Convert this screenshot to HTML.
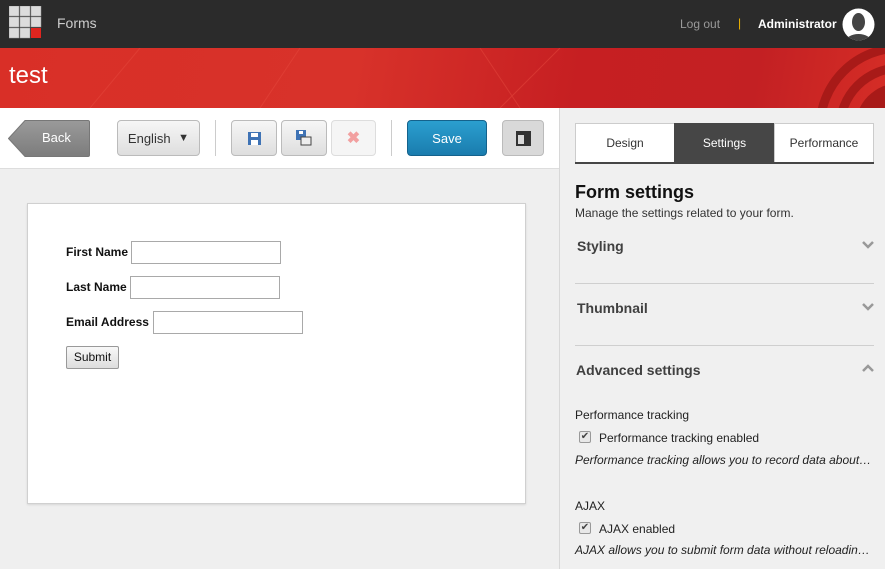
<!DOCTYPE html>
<html><head><style>
*{box-sizing:border-box;margin:0;padding:0}
body{width:885px;height:569px;overflow:hidden;font-family:"Liberation Sans",sans-serif;background:#efefef;position:relative}
.a{position:absolute}
.top{left:0;top:0;width:885px;height:48px;background:#2b2b2b}
.ban{left:0;top:48px;width:885px;height:60px;background:linear-gradient(100deg,#d92f27 0%,#d8322a 40%,#c61f22 65%,#c32023 85%,#d52d26 100%);overflow:hidden}
.tb{left:0;top:108px;width:559px;height:61px;background:#fff;border-bottom:1px solid #ddd}
.btn{position:absolute;top:120px;height:36px;border:1px solid #bbb;border-radius:4px;background:linear-gradient(#f6f6f6,#dedede);font-size:13px;color:#333;display:flex;align-items:center;justify-content:center}
.sep{position:absolute;top:120px;width:1px;height:36px;background:#ccc}
.rp{left:559px;top:108px;width:326px;height:461px;background:#f0f0f0;border-left:1px solid #d8d8d8}
.tab{position:absolute;top:123px;height:40px;font-size:12px;display:flex;align-items:center;justify-content:center;border:1px solid #ccc;background:#fff;color:#333}
.sec{position:absolute;left:577px;font-size:14px;font-weight:bold;color:#404040}
.hr{position:absolute;left:575px;width:299px;height:1px;background:#cfcfcf}
.chev{position:absolute;left:862px;width:12px;height:12px}
.lbl{position:absolute;left:66px;font-size:12px;font-weight:bold;color:#111}
.inp{position:absolute;height:23px;width:150px;border:1px solid #a9a9a9;background:#fff}
.cb{position:absolute;left:579px;width:12px;height:12px;border:1px solid #999;border-radius:2px;background:#e8e8e8;font-size:10px;line-height:10px;text-align:center;color:#444}
.t12{position:absolute;font-size:12px;color:#222}
</style></head><body>
<div class="a top"></div>
<svg class="a" style="left:9px;top:6px" width="33" height="33">
<g fill="#dcdcdc" stroke="#999" stroke-width=".5"><rect x="0" y="0" width="10" height="10"/><rect x="11" y="0" width="10" height="10"/><rect x="22" y="0" width="10" height="10"/><rect x="0" y="11" width="10" height="10"/><rect x="11" y="11" width="10" height="10"/><rect x="22" y="11" width="10" height="10"/><rect x="0" y="22" width="10" height="10"/><rect x="11" y="22" width="10" height="10"/></g><rect x="22" y="22" width="10" height="10" fill="#e0251f"/></svg>
<div class="a" style="left:57px;top:15px;font-size:14px;color:#ccc">Forms</div>
<div class="a" style="left:680px;top:17px;font-size:12px;color:#999">Log out</div>
<div class="a" style="left:738px;top:16px;font-size:12px;color:#f0b400">|</div>
<div class="a" style="left:758px;top:17px;font-size:12px;color:#fff;font-weight:bold">Administrator</div>
<svg class="a" style="left:842px;top:8px" width="33" height="33"><circle cx="16.5" cy="16.5" r="16" fill="#fff"/><clipPath id="c"><circle cx="16.5" cy="16.5" r="16"/></clipPath><g clip-path="url(#c)" fill="#444"><ellipse cx="16.5" cy="14" rx="6.5" ry="9"/><ellipse cx="16.5" cy="34" rx="13" ry="8"/></g></svg>
<div class="a ban"><svg width="885" height="60"><g stroke="#e54a3e" stroke-width="1" opacity=".5"><line x1="90" y1="60" x2="140" y2="0"/><line x1="260" y1="60" x2="300" y2="0"/><line x1="500" y1="60" x2="560" y2="0"/><line x1="480" y1="0" x2="520" y2="60"/></g><g fill="none" stroke="#a81a18" stroke-width="9"><circle cx="900" cy="80" r="60"/><circle cx="900" cy="80" r="80"/></g><circle cx="900" cy="80" r="45" fill="#a81a18"/></svg></div>
<div class="a" style="left:9px;top:62px;font-size:24px;color:#fff">test</div>
<div class="a tb"></div>
<svg class="a" style="left:8px;top:120px" width="82" height="37"><defs><linearGradient id="g" x1="0" y1="0" x2="0" y2="1"><stop offset="0" stop-color="#9a9a9a"/><stop offset="1" stop-color="#7c7c7c"/></linearGradient></defs><path d="M17 .5H80a1.5 1.5 0 0 1 1.5 1.5v33a1.5 1.5 0 0 1-1.5 1.5H17L.5 18.5z" fill="url(#g)" stroke="#777"/></svg>
<div class="a" style="left:42px;top:130px;font-size:13px;color:#fff">Back</div>
<div class="btn" style="left:117px;width:83px">English&nbsp;<span style="font-size:11px;margin-left:4px">▼</span></div>
<div class="sep" style="left:215px"></div>
<div class="btn" style="left:231px;width:46px"><svg width="13" height="13"><rect x="0" y="0" width="13" height="13" fill="#3f73b5"/><rect x="3" y="1" width="7" height="4" fill="#fff"/><rect x="3" y="8" width="7" height="5" fill="#fff"/></svg></div>
<div class="btn" style="left:281px;width:46px"><svg width="16" height="16"><rect x="0" y="0" width="10" height="10" fill="#3f73b5"/><rect x="3" y="1" width="4" height="3" fill="#fff"/><rect x="5" y="7" width="10" height="8" fill="#eee" stroke="#444"/></svg></div>
<div class="btn" style="left:331px;width:45px;background:#f5f5f5;border-color:#ddd;color:#f2a0a0;font-size:16px;font-weight:bold">✖</div>
<div class="sep" style="left:391px"></div>
<div class="btn" style="left:407px;width:80px;background:linear-gradient(#2b9fcf,#1a7cae);border-color:#14628c;color:#fff">Save</div>
<div class="btn" style="left:502px;width:42px;background:#d9d9d9;border-color:#bbb"><svg width="15" height="15"><rect x="1" y="1" width="13" height="13" fill="none" stroke="#333" stroke-width="2"/><rect x="1" y="1" width="13" height="3" fill="#333"/><rect x="8" y="4" width="6" height="10" fill="#333"/></svg></div>
<div class="a" style="left:27px;top:203px;width:499px;height:301px;background:#fff;border:1px solid #d0d0d0;box-shadow:0 1px 2px rgba(0,0,0,.1)"></div>
<div class="lbl" style="top:245px">First Name</div><div class="inp" style="left:131px;top:241px"></div>
<div class="lbl" style="top:280px">Last Name</div><div class="inp" style="left:130px;top:276px"></div>
<div class="lbl" style="top:315px">Email Address</div><div class="inp" style="left:153px;top:311px"></div>
<div class="a" style="left:66px;top:346px;width:53px;height:23px;border:1px solid #999;border-radius:2px;background:linear-gradient(#f8f8f8,#ddd);font-size:12px;text-align:center;line-height:21px;color:#111">Submit</div>
<div class="a rp"></div>
<div class="tab" style="left:575px;width:100px">Design</div>
<div class="tab" style="left:674px;width:101px;background:#464646;border-color:#464646;color:#fff">Settings</div>
<div class="tab" style="left:774px;width:100px">Performance</div>
<div class="a" style="left:575px;top:162px;width:299px;height:2px;background:#464646"></div>
<div class="a" style="left:575px;top:182px;font-size:18px;font-weight:bold;color:#111">Form settings</div>
<div class="a" style="left:575px;top:206px;font-size:12px;color:#333">Manage the settings related to your form.</div>
<div class="sec" style="top:238px">Styling</div>
<svg class="chev" style="top:239px"><path d="M1 3l5 5 5-5" fill="none" stroke="#999" stroke-width="2.5"/></svg>
<div class="hr" style="top:283px"></div>
<div class="sec" style="top:300px">Thumbnail</div>
<svg class="chev" style="top:301px"><path d="M1 3l5 5 5-5" fill="none" stroke="#999" stroke-width="2.5"/></svg>
<div class="hr" style="top:345px"></div>
<div class="sec" style="left:576px;top:362px">Advanced settings</div>
<svg class="chev" style="top:362px"><path d="M1 9l5-5 5 5" fill="none" stroke="#999" stroke-width="2.5"/></svg>
<div class="t12" style="left:575px;top:408px">Performance tracking</div>
<div class="cb" style="top:431px">✔</div>
<div class="t12" style="left:599px;top:431px">Performance tracking enabled</div>
<div class="t12" style="left:575px;top:453px;font-style:italic">Performance tracking allows you to record data about…</div>
<div class="t12" style="left:575px;top:499px">AJAX</div>
<div class="cb" style="top:522px">✔</div>
<div class="t12" style="left:599px;top:522px">AJAX enabled</div>
<div class="t12" style="left:575px;top:543px;font-style:italic">AJAX allows you to submit form data without reloadin…</div>
</body></html>
